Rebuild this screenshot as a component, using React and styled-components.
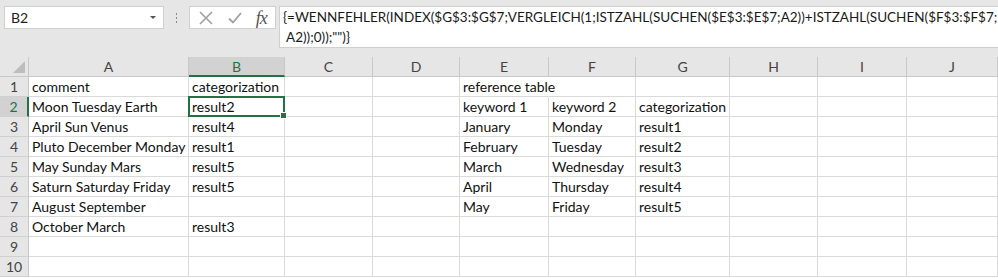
import React from "react";
import styled, { createGlobalStyle, css } from "styled-components";

const GlobalStyle = createGlobalStyle`
  html, body {
    margin: 0;
    padding: 0;
    background: #ffffff;
  }
  body {
    font-family: Lato, "Open Sans", sans-serif;
    overflow: hidden;
  }
`;

const GREEN = "#217346";
const GRID = "#dadada";

const COLS = [
  { name: "A", width: 160 },
  { name: "B", width: 96 },
  { name: "C", width: 88 },
  { name: "D", width: 87 },
  { name: "E", width: 89 },
  { name: "F", width: 87 },
  { name: "G", width: 94 },
  { name: "H", width: 88 },
  { name: "I", width: 89 },
  { name: "J", width: 91 },
];

const ROWS = [
  ["comment", "categorization", "", "", "reference table"],
  ["Moon Tuesday Earth", "result2", "", "", "keyword 1", "keyword 2", "categorization"],
  ["April Sun Venus", "result4", "", "", "January", "Monday", "result1"],
  ["Pluto December Monday", "result1", "", "", "February", "Tuesday", "result2"],
  ["May Sunday Mars", "result5", "", "", "March", "Wednesday", "result3"],
  ["Saturn Saturday Friday", "result5", "", "", "April", "Thursday", "result4"],
  ["August September", "", "", "", "May", "Friday", "result5"],
  ["October March", "result3"],
  [],
  [],
];

const Page = styled.div`
  width: 998px;
  height: 278px;
  overflow: hidden;
  background: #ffffff;
`;

const FormulaArea = styled.div`
  height: 57px;
  background: #e6e6e6;
  display: flex;
  align-items: flex-start;
  padding: 6px 0 0 4px;
  box-sizing: border-box;
`;

const NameBox = styled.div`
  width: 160px;
  height: 23px;
  box-sizing: border-box;
  background: #fff;
  border: 1px solid #d0d0d0;
  display: flex;
  align-items: center;
  justify-content: space-between;
  padding: 0 7px 0 6px;
  font-size: 14px;
  color: #222;
`;

const Caret = styled.span`
  width: 0;
  height: 0;
  border-left: 3px solid transparent;
  border-right: 3px solid transparent;
  border-top: 3px solid #555;
`;

const Grip = styled.div`
  width: 25px;
  height: 23px;
  display: flex;
  flex-direction: column;
  align-items: center;
  justify-content: center;
  gap: 2px;
  & > span {
    width: 1px;
    height: 2px;
    background: #8a8a8a;
  }
`;

const ButtonGroup = styled.div`
  width: 87px;
  height: 23px;
  box-sizing: border-box;
  background: #fff;
  border: 1px solid #d0d0d0;
  display: flex;
  align-items: center;
  justify-content: space-around;
  padding: 0 2px;
`;

const Fx = styled.span`
  font-family: "Liberation Serif", serif;
  font-style: italic;
  font-size: 18px;
  color: #555;
  letter-spacing: -1px;
  line-height: 1;
`;

const FormulaBox = styled.div`
  margin-left: 3px;
  flex: 1;
  height: 42px;
  box-sizing: border-box;
  background: #fff;
  border: 1px solid #d0d0d0;
  border-right: none;
  padding: 0 0 0 3px;
  font-size: 13.5px;
  line-height: 20px;
  color: #1a1a1a;
  white-space: pre;
  overflow: hidden;
`;

const Sheet = styled.div`
  display: grid;
  grid-template-columns: 29px ${COLS.map((c) => `${c.width}px`).join(" ")};
  grid-auto-rows: 20px;
  font-size: 14px;
`;

const Corner = styled.div`
  background: #e6e6e6;
  border-right: 1px solid #c8c8c8;
  border-bottom: 1px solid #c8c8c8;
  box-sizing: border-box;
  display: flex;
  align-items: flex-end;
  justify-content: flex-end;
  padding: 0 3px 3px 0;
  & > span {
    width: 0;
    height: 0;
    border-left: 12px solid transparent;
    border-bottom: 12px solid #bdbdbd;
  }
`;

const ColHeader = styled.div`
  box-sizing: border-box;
  background: ${(p) => (p.$active ? "#d2d2d2" : "#e6e6e6")};
  border-right: 1px solid #c8c8c8;
  border-bottom: ${(p) => (p.$active ? `2px solid ${GREEN}` : "1px solid #c8c8c8")};
  color: ${(p) => (p.$active ? GREEN : "#444")};
  display: flex;
  align-items: center;
  justify-content: center;
  font-size: 14px;
`;

const RowHeader = styled.div`
  box-sizing: border-box;
  background: ${(p) => (p.$active ? "#d2d2d2" : "#e6e6e6")};
  border-right: ${(p) => (p.$active ? `2px solid ${GREEN}` : "1px solid #c8c8c8")};
  border-bottom: 1px solid #d0d0d0;
  color: ${(p) => (p.$active ? GREEN : "#444")};
  display: flex;
  align-items: center;
  justify-content: center;
  font-size: 14px;
`;

const Cell = styled.div`
  position: relative;
  box-sizing: border-box;
  border-right: 1px solid ${(p) => (p.$spill ? "transparent" : GRID)};
  border-bottom: 1px solid ${GRID};
  padding: 0 3px;
  display: flex;
  align-items: center;
  color: #111;
  white-space: nowrap;
  overflow: ${(p) => (p.$spill || p.$selected ? "visible" : "hidden")};
  ${(p) =>
    p.$selected &&
    css`
      &::after {
        content: "";
        position: absolute;
        left: -1px;
        top: -1px;
        right: -1px;
        bottom: -1px;
        border: 2px solid ${GREEN};
      }
      &::before {
        content: "";
        position: absolute;
        right: -3px;
        bottom: -3px;
        width: 5px;
        height: 5px;
        background: ${GREEN};
        border: 1px solid #fff;
        z-index: 1;
      }
    `}
`;

const CancelIcon = () => (
  <svg width="16" height="16" viewBox="0 0 16 16">
    <path d="M2 2 L14 14 M14 2 L2 14" stroke="#a0a0a0" strokeWidth="1.6" fill="none" />
  </svg>
);

const CheckIcon = () => (
  <svg width="16" height="16" viewBox="0 0 16 16">
    <path d="M2 8.5 L6 12.5 L14 3" stroke="#a0a0a0" strokeWidth="1.8" fill="none" />
  </svg>
);

const FORMULA =
  '{=WENNFEHLER(INDEX($G$3:$G$7;VERGLEICH(1;ISTZAHL(SUCHEN($E$3:$E$7;A2))+ISTZAHL(SUCHEN($F$3:$F$7;\n A2));0));"")}';

export default function App() {
  return (
    <Page>
      <GlobalStyle />
      <FormulaArea>
        <NameBox>
          B2
          <Caret />
        </NameBox>
        <Grip>
          <span />
          <span />
          <span />
        </Grip>
        <ButtonGroup>
          <CancelIcon />
          <CheckIcon />
          <Fx>fx</Fx>
        </ButtonGroup>
        <FormulaBox>{FORMULA}</FormulaBox>
      </FormulaArea>
      <Sheet>
        <Corner>
          <span />
        </Corner>
        {COLS.map((c) => (
          <ColHeader key={c.name} $active={c.name === "B"}>
            {c.name}
          </ColHeader>
        ))}
        {ROWS.map((row, r) => (
          <React.Fragment key={r}>
            <RowHeader $active={r === 1}>{r + 1}</RowHeader>
            {COLS.map((c, ci) => (
              <Cell
                key={c.name}
                $selected={r === 1 && ci === 1}
                $spill={r === 0 && ci === 4}
              >
                {row[ci] || ""}
              </Cell>
            ))}
          </React.Fragment>
        ))}
      </Sheet>
    </Page>
  );
}
